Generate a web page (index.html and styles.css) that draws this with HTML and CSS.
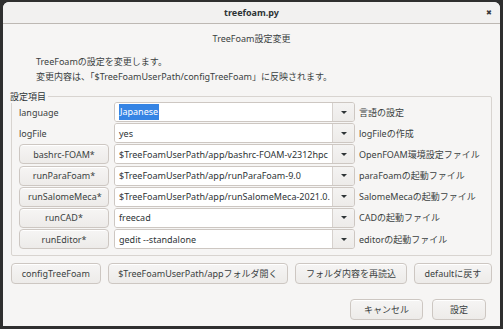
FILE: index.html
```html
<!DOCTYPE html>
<html lang="ja">

<head>
  <meta charset="UTF-8">
  <title>treefoam.py</title>
  <link rel="stylesheet" href="styles.css">
</head>

<body>

  <div class="window">
    <div class="titlebar">
      <span class="title">treefoam.py</span>
      <span class="close">&#x2716;</span>
    </div>

    <div class="content">
      <div class="heading">TreeFoam設定変更</div>
      <div class="intro">
        <div>TreeFoamの設定を変更します。</div>
        <div>変更内容は、「$TreeFoamUserPath/configTreeFoam」に反映されます。</div>
      </div>

      <fieldset class="settings">
        <legend>設定項目</legend>
        <div class="rows">
          <span class="name">language</span>
          <div class="combo">
            <span class="entry"><span class="selected">Japanese</span></span>
            <span class="arrow"></span>
          </div>
          <span class="desc">言語の設定</span>

          <span class="name">logFile</span>
          <div class="combo">
            <span class="entry">yes</span>
            <span class="arrow"></span>
          </div>
          <span class="desc">logFileの作成</span>

          <button class="btn">bashrc-FOAM*</button>
          <div class="combo">
            <span class="entry">$TreeFoamUserPath/app/bashrc-FOAM-v2312hpc</span>
            <span class="arrow"></span>
          </div>
          <span class="desc">OpenFOAM環境設定ファイル</span>

          <button class="btn">runParaFoam*</button>
          <div class="combo">
            <span class="entry">$TreeFoamUserPath/app/runParaFoam-9.0</span>
            <span class="arrow"></span>
          </div>
          <span class="desc">paraFoamの起動ファイル</span>

          <button class="btn">runSalomeMeca*</button>
          <div class="combo">
            <span class="entry">$TreeFoamUserPath/app/runSalomeMeca-2021.0.</span>
            <span class="arrow"></span>
          </div>
          <span class="desc">SalomeMecaの起動ファイル</span>

          <button class="btn">runCAD*</button>
          <div class="combo">
            <span class="entry">freecad</span>
            <span class="arrow"></span>
          </div>
          <span class="desc">CADの起動ファイル</span>

          <button class="btn">runEditor*</button>
          <div class="combo">
            <span class="entry">gedit --standalone</span>
            <span class="arrow"></span>
          </div>
          <span class="desc">editorの起動ファイル</span>
        </div>
      </fieldset>

      <div class="tools">
        <button class="btn">configTreeFoam</button>
        <button class="btn">$TreeFoamUserPath/appフォルダ開く</button>
        <button class="btn">フォルダ内容を再読込</button>
        <button class="btn">defaultに戻す</button>
      </div>

      <div class="actions">
        <button class="btn cancel">キャンセル</button>
        <button class="btn ok">設定</button>
      </div>
    </div>
  </div>

</body>

</html>
```

FILE: styles.css
```css
body {
  margin: 0;
  background: #2f2f2f;
  font-family: 'Noto Sans', 'Noto Sans CJK JP', sans-serif;
  font-size: 9px;
  color: #2e3436;
}

.window {
  margin: 2px 3px 0 3px;
  height: 324px;
  background: #f6f5f4;
  border-radius: 6px 6px 0 0;
  overflow: hidden;
}

.titlebar {
  position: relative;
  height: 21px;
  border-bottom: 1px solid #bdb8b3;
  background: #f2f1f0;
  display: flex;
  align-items: center;
  justify-content: center;
}

.title {
  font-weight: bold;
  font-size: 9px;
}

.close {
  position: absolute;
  right: 8px;
  top: 6px;
  font-size: 7px;
  color: #3a3a3a;
}

.content {
  padding: 0 8px 0 8px;
}

.heading {
  text-align: center;
  margin-top: 7px;
  line-height: 15px;
  color: #3a3f41;
}

.intro {
  margin: 8px 0 0 25px;
  line-height: 15px;
  color: #3a3f41;
}

.settings {
  margin: 6px 0 0 0;
  padding: 0;
  border: 1px solid #d8d4d0;
  border-radius: 2px;
}

.settings legend {
  padding: 0 2px 0 0;
  margin-left: -2px;
  line-height: 13px;
}

.rows {
  display: grid;
  grid-template-columns: 91px 241px auto;
  grid-auto-rows: 20px;
  column-gap: 4px;
  row-gap: 1.2px;
  padding: 0 7px 6px 7px;
  margin-top: -1px;
}

.rows .btn {
  margin-right: 1px;
}

.name {
  display: flex;
  align-items: center;
  color: #3a3f41;
}

.desc {
  display: flex;
  align-items: center;
  color: #3a3f41;
  white-space: nowrap;
}

.combo {
  display: flex;
  height: 20px;
  box-sizing: border-box;
  border: 1px solid #cdc7c2;
  border-radius: 3px;
  overflow: hidden;
}

.entry {
  flex: 1;
  background: #fff;
  padding-left: 4px;
  display: flex;
  align-items: center;
  white-space: nowrap;
  overflow: hidden;
}

.selected {
  background: #3584e4;
  color: #fff;
  padding: 0 1px;
  line-height: 16px;
}

.arrow {
  flex: none;
  width: 21px;
  border-left: 1px solid #d6d1cd;
  background: linear-gradient(#f4f3f2, #edebe9);
  display: flex;
  align-items: center;
  justify-content: center;
}

.arrow::after {
  content: "";
  border-left: 3px solid transparent;
  border-right: 3px solid transparent;
  border-top: 3px solid #2e3436;
}

.btn {
  font: inherit;
  color: #3a3f41;
  height: 20px;
  padding: 0 8px;
  border: 1px solid #cdc7c2;
  border-radius: 4px;
  background: linear-gradient(#f6f5f4, #edebe9);
  box-shadow: inset 0 1px #fff;
  white-space: nowrap;
}

.tools {
  display: flex;
  gap: 7px;
  margin-top: 7px;
}

.tools .btn {
  flex: 1 1 auto;
  height: 21px;
}

.actions {
  display: flex;
  justify-content: flex-end;
  gap: 9px;
  margin-top: 15px;
  padding-right: 6px;
}

.actions .btn {
  height: 21px;
  padding: 0 13px;
  min-width: 54px;
}
```
